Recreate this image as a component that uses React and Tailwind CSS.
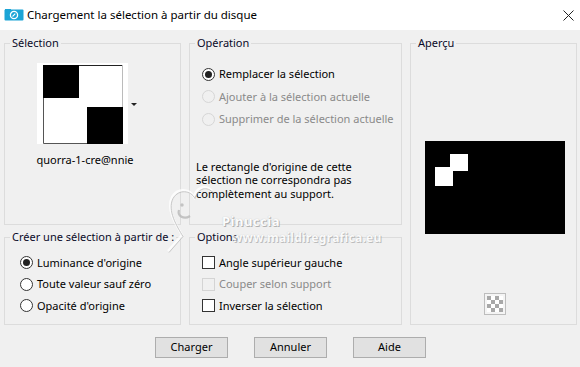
import React from "react";

const font = { fontFamily: '"Segoe UI", "Noto Sans", "Liberation Sans", sans-serif' };

function Radio({ checked, disabled, label }) {
  return (
    <div className="flex items-center h-[21.5px] whitespace-nowrap">
      <span
        className={`w-[13px] h-[13px] rounded-full border flex items-center justify-center ${
          disabled ? "border-[#c4c4c4] bg-[#f0f0f0]" : "border-[#333] bg-white"
        }`}
      >
        {checked && <span className="w-[7px] h-[7px] rounded-full bg-[#222]" />}
      </span>
      <span className={`ml-[4px] ${disabled ? "text-[#8a8a8a]" : "text-black"}`}>{label}</span>
    </div>
  );
}

function Check({ disabled, label }) {
  return (
    <div className="flex items-center h-[21.5px] whitespace-nowrap">
      <span
        className={`w-[13px] h-[13px] border ${
          disabled ? "border-[#d4d4d4] bg-[#f0f0f0]" : "border-[#333] bg-white"
        }`}
      />
      <span className={`ml-[4px] ${disabled ? "text-[#8a8a8a]" : "text-black"}`}>{label}</span>
    </div>
  );
}

function Group({ title, children, className = "" }) {
  return (
    <fieldset className={`border border-[#dcdcdc] min-w-0 ${className}`}>
      <legend className="ml-[5px] px-[2px] leading-[16px] text-[#0a0a28] whitespace-nowrap">{title}</legend>
      {children}
    </fieldset>
  );
}

export default function App() {
  return (
    <div className="relative w-[580px] h-[367px] bg-[#f0f0f0] text-[11px] text-black overflow-hidden" style={font}>
      {/* Title bar */}
      <div className="h-[30px] bg-white flex items-center">
        <svg width="20" height="12" viewBox="0 0 20 12" className="ml-[4px]">
          <rect x="0.5" y="0.5" width="19" height="11" rx="1" fill="#1ba4d6" />
          <rect x="1" y="0" width="6" height="2" fill="#1ba4d6" />
          <circle cx="10" cy="6" r="3.6" fill="none" stroke="#ffffff" strokeWidth="1.3" />
          <path d="M8.5 7.5 L11.3 4.7" stroke="#ffffff" strokeWidth="1.1" />
        </svg>
        <span className="ml-[3px] text-[11.5px] text-black whitespace-nowrap">Chargement la sélection à partir du disque</span>
        <div className="flex-1" />
        <svg width="11" height="11" viewBox="0 0 11 11" className="mr-[6px]">
          <path d="M0.5 0.5 L10.5 10.5 M10.5 0.5 L0.5 10.5" stroke="#222" strokeWidth="1" />
        </svg>
      </div>

      {/* Groups */}
      <div className="pl-[4px] pt-[5px] grid grid-cols-[177px_213px_167px] grid-rows-[190px_96px] gap-x-[8px] gap-y-[4px]">
        <Group title="Sélection" className="col-start-1 row-start-1">
          <div className="pt-[12px] pl-[32px]">
            <div className="flex items-start">
              <div className="w-[91px] h-[81px] bg-white pt-[2px] pl-[6px]">
                <svg width="80" height="79" viewBox="0 0 80 79">
                  <rect x="0" y="0" width="36" height="33" fill="#000" />
                  <rect x="44" y="42" width="36" height="37" fill="#000" />
                  <path d="M36 0.5 H79" stroke="#222" strokeWidth="1" />
                  <path d="M0.5 33 V78.5 H44" stroke="#555" strokeWidth="1" fill="none" />
                  <path d="M79.5 0 V42" stroke="#bbb" strokeWidth="1" />
                </svg>
              </div>
              <svg width="6" height="4" viewBox="0 0 6 4" className="ml-[3px] mt-[40px]">
                <path d="M0 0 H6 L3 3 Z" fill="#222" />
              </svg>
            </div>
            <div className="w-[96px] flex justify-center mt-[8px] whitespace-nowrap">quorra-1-cre@nnie</div>
          </div>
        </Group>

        <Group title="Opération" className="col-start-2 row-start-1">
          <div className="pt-[12px] pl-[12px] whitespace-nowrap">
            <div className="flex items-center h-[22.5px]">
              <span className="w-[13px] h-[13px] rounded-full border border-[#333] bg-white flex items-center justify-center">
                <span className="w-[7px] h-[7px] rounded-full bg-[#222]" />
              </span>
              <span className="ml-[4px]">Remplacer la sélection</span>
            </div>
            <div className="flex items-center h-[22.5px]">
              <span className="w-[13px] h-[13px] rounded-full border border-[#d6d6d6] bg-[#f0f0f0]" />
              <span className="ml-[4px] text-[#8a8a8a]">Ajouter à la sélection actuelle</span>
            </div>
            <div className="flex items-center h-[22.5px]">
              <span className="w-[13px] h-[13px] rounded-full border border-[#d6d6d6] bg-[#f0f0f0]" />
              <span className="ml-[4px] text-[#8a8a8a]">Supprimer de la sélection actuelle</span>
            </div>
          </div>
          <p className="mt-[29px] pl-[6px] leading-[13.5px] whitespace-nowrap">
            Le rectangle d'origine de cette
            <br />
            sélection ne correspondra pas
            <br />
            complètement au support.
          </p>
        </Group>

        <Group title="Aperçu" className="col-start-3 row-start-1 row-span-2">
          <div className="flex flex-col items-center">
            <svg width="140" height="93" viewBox="0 0 140 93" className="mt-[90px] ml-[3px]">
              <rect width="140" height="93" fill="#000" />
              <rect x="25" y="13" width="18" height="17" fill="#fff" />
              <rect x="10" y="26" width="18" height="19" fill="#fff" />
            </svg>
            <div className="mt-[59px] ml-[3px] w-[22px] h-[22px] border border-[#bdbdbd] bg-[#f4f4f4] flex items-center justify-center">
              <svg width="16" height="16" viewBox="0 0 16 16">
                <rect width="16" height="16" fill="#fff" />
                <rect x="0" y="0" width="4" height="4" fill="#a8a8a8" />
                <rect x="8" y="0" width="4" height="4" fill="#a8a8a8" />
                <rect x="4" y="4" width="4" height="4" fill="#a8a8a8" />
                <rect x="12" y="4" width="4" height="4" fill="#a8a8a8" />
                <rect x="0" y="8" width="4" height="4" fill="#a8a8a8" />
                <rect x="8" y="8" width="4" height="4" fill="#a8a8a8" />
                <rect x="4" y="12" width="4" height="4" fill="#a8a8a8" />
                <rect x="12" y="12" width="4" height="4" fill="#a8a8a8" />
              </svg>
            </div>
          </div>
        </Group>

        <Group title="Créer une sélection à partir de :" className="col-start-1 row-start-2">
          <div className="pt-[7px] pl-[15px]">
            <Radio checked label="Luminance d'origine" />
            <Radio label="Toute valeur sauf zéro" />
            <Radio label="Opacité d'origine" />
          </div>
        </Group>

        <Group title="Options" className="col-start-2 row-start-2">
          <div className="pt-[7px] pl-[12px]">
            <Check label="Angle supérieur gauche" />
            <Check disabled label="Couper selon support" />
            <Check label="Inverser la sélection" />
          </div>
        </Group>
      </div>

      {/* Buttons */}
      <div className="mt-[12px] flex justify-center gap-[26px] pl-[1px]">
        {["Charger", "Annuler", "Aide"].map((b) => (
          <button
            key={b}
            className="w-[73px] h-[21px] bg-[#e1e1e1] border border-[#adadad] text-[11px] text-black flex items-center justify-center"
          >
            {b}
          </button>
        ))}
      </div>

      {/* Watermark */}
      <div className="absolute left-[160px] top-[183px] pointer-events-none opacity-80">
        <svg width="60" height="70" viewBox="0 0 60 70">
          <path d="M52 8 C44 0 36 6 34 14 C30 6 18 4 12 14 C6 26 16 42 22 52 L8 68" fill="none" stroke="#ffffff" strokeWidth="2.5" />
          <path d="M53 9.5 C45 1.5 37 7.5 35 15.5 C31 7.5 19 5.5 13 15.5 C7 27.5 17 43.5 23 53.5 L9 69.5" fill="none" stroke="#bdbdbd" strokeWidth="1" />
          <path d="M19 27 C17 33 24 37 30 33" fill="none" stroke="#b8b8b8" strokeWidth="2.2" />
          <circle cx="22" cy="22" r="1.7" fill="#b8b8b8" />
        </svg>
      </div>
      <div className="absolute left-[222px] top-[212px] pointer-events-none font-bold text-[13px] tracking-[0.5px] text-white opacity-85 [text-shadow:1px_1px_0_#a8a8a8,0_0_1px_#b0b0b0]">
        Pinuccia
      </div>
      <div className="absolute left-[232px] top-[229px] pointer-events-none font-bold text-[12px] tracking-[0.3px] text-white opacity-70 [text-shadow:1px_1px_0_#a8a8a8,0_0_1px_#b0b0b0]">
        www.maildiregrafica.eu
      </div>
    </div>
  );
}
